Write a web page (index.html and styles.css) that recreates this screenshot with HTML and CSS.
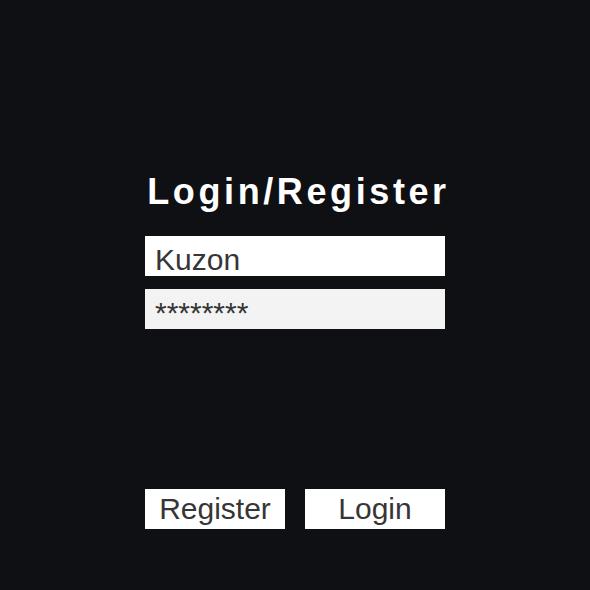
FILE: index.html
```html
<!DOCTYPE html>
<html>
<head>
<meta charset="utf-8">
<link rel="stylesheet" href="styles.css">
</head>
<body>
<main class="panel">
  <h1 class="title">Login/Register</h1>
  <div class="field field-user">Kuzon</div>
  <div class="field field-pass">********</div>
  <div class="actions">
    <button class="btn">Register</button>
    <button class="btn">Login</button>
  </div>
</main>
</body>
</html>
```
FILE: styles.css
```css
html, body {
  margin: 0;
  padding: 0;
  background: #0f1014;
  width: 590px;
  height: 590px;
  overflow: hidden;
}
.panel {
  width: 300px;
  margin: 0 auto;
  padding-top: 171px;
  display: flex;
  flex-direction: column;
  font-family: "Liberation Sans", Arial, sans-serif;
}
.title {
  margin: 0 -10px 23px -10px;
  padding-left: 7px;
  font-size: 36px;
  font-weight: bold;
  letter-spacing: 3.6px;
  line-height: normal;
  color: #ffffff;
  text-align: center;
  white-space: nowrap;
}
.field {
  height: 36px;
  padding: 4px 10px 0 10px;
  font-size: 30px;
  line-height: 40px;
  color: #363636;
  overflow: hidden;
}
.field-user {
  background: #ffffff;
}
.field-pass {
  background: #f3f3f3;
  margin-top: 13px;
}
.actions {
  margin-top: 160px;
  display: flex;
  gap: 20px;
}
.btn {
  width: 140px;
  height: 40px;
  padding: 0;
  border: none;
  border-radius: 0;
  background: #ffffff;
  color: #363636;
  font-family: "Liberation Sans", Arial, sans-serif;
  font-size: 30px;
  line-height: 40px;
}
```
